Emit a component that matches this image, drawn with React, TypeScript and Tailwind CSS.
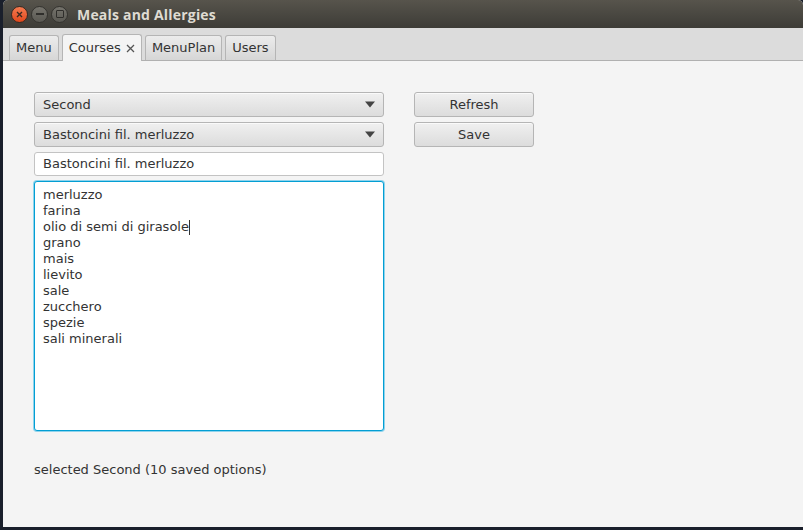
import React from 'react';

const ingredients = [
  'merluzzo',
  'farina',
  'olio di semi di girasole',
  'grano',
  'mais',
  'lievito',
  'sale',
  'zucchero',
  'spezie',
  'sali minerali',
];

const tabs = ['Menu', 'Courses', 'MenuPlan', 'Users'];

function Caret() {
  return (
    <svg width="12" height="7" viewBox="0 0 12 7" className="shrink-0">
      <path d="M1 0.5 L11 0.5 L6 6.5 Z" fill="#444" />
    </svg>
  );
}

function Combo({ value }: { value: string }) {
  return (
    <div className="h-[25px] flex items-center justify-between pl-[8px] pr-[7px] rounded-[3px] border border-[#b5b5b5] bg-gradient-to-b from-[#f0f0f0] to-[#dcdcdc] shadow-[inset_0_1px_0_#fafafa]">
      <span>{value}</span>
      <Caret />
    </div>
  );
}

function Btn({ label }: { label: string }) {
  return (
    <div className="h-[25px] w-[120px] flex items-center justify-center rounded-[3px] border border-[#b5b5b5] bg-gradient-to-b from-[#f0f0f0] to-[#dcdcdc] shadow-[inset_0_1px_0_#fafafa]">
      {label}
    </div>
  );
}

export default function App() {
  return (
    <div className="w-[803px] h-[530px] bg-[#1a1f2b] overflow-hidden" style={{ fontFamily: '"DejaVu Sans", sans-serif' }}>
      <div className="ml-[3px] w-[800px] h-[527px] flex flex-col bg-[#f4f4f4] rounded-t-[5px] overflow-hidden">
        {/* Title bar */}
        <div className="h-[28px] shrink-0 flex items-center bg-gradient-to-b from-[#57544c] to-[#3d3c37] pl-[8px]">
          <div className="flex gap-[3px]">
            <div className="w-[17px] h-[17px] rounded-full bg-gradient-to-b from-[#f47a4f] to-[#e0471a] flex items-center justify-center border border-[#3a2a22]">
              <svg width="7" height="7" viewBox="0 0 7 7">
                <path d="M1 1 L6 6 M6 1 L1 6" stroke="#3b2a20" strokeWidth="1.4" />
              </svg>
            </div>
            <div className="w-[17px] h-[17px] rounded-full bg-gradient-to-b from-[#75736c] to-[#5a5953] flex items-center justify-center border border-[#34332f]">
              <div className="w-[8px] h-[1.5px] bg-[#2f2e2b]" />
            </div>
            <div className="w-[17px] h-[17px] rounded-full bg-gradient-to-b from-[#75736c] to-[#5a5953] flex items-center justify-center border border-[#34332f]">
              <div className="w-[8px] h-[8px] border-[1.5px] border-[#2f2e2b] rounded-[1px]" />
            </div>
          </div>
          <span className="ml-[9px] text-[14px] font-bold text-[#dfdbd2] tracking-[0.2px]" style={{ fontFamily: '"Open Sans", sans-serif' }}>
            Meals and Allergies
          </span>
        </div>

        {/* Tab bar */}
        <div className="h-[33px] shrink-0 bg-[#dcdcdc] border-b border-[#b0b0b0] flex items-end pl-[6px] gap-[3px] text-[13px] text-[#333]">
          {tabs.map((t) =>
            t === 'Courses' ? (
              <div key={t} className="h-[27px] -mb-px px-[6px] flex items-center gap-[5px] bg-[#f4f4f4] border border-b-0 border-[#b5b5b5] rounded-t-[3px]">
                <span>{t}</span>
                <svg width="9" height="9" viewBox="0 0 9 9">
                  <path d="M1 1 L8 8 M8 1 L1 8" stroke="#555" strokeWidth="1.3" />
                </svg>
              </div>
            ) : (
              <div key={t} className="h-[25px] px-[6px] flex items-center bg-gradient-to-b from-[#ececec] to-[#d6d6d6] border border-b-0 border-[#b5b5b5] rounded-t-[3px]">
                {t}
              </div>
            )
          )}
        </div>

        {/* Content */}
        <div className="flex-1 pl-[31px] pt-[31px] text-[13px] text-[#333]">
          <div className="flex gap-[30px]">
            <div className="w-[350px] flex flex-col gap-[5px]">
              <Combo value="Second" />
              <Combo value="Bastoncini fil. merluzzo" />
              <div className="h-[24px] flex items-center px-[8px] bg-white border border-[#c3c3c3] rounded-[3px]">
                Bastoncini fil. merluzzo
              </div>
              <div className="h-[250px] bg-white border border-[#039ed3] rounded-[3px] shadow-[0_0_0_1px_#8fd3ec] px-[8px] pt-[5px] leading-[16px]">
                {ingredients.map((i) => (
                  <div key={i} className="flex items-center">
                    <span>{i}</span>
                    {i === 'olio di semi di girasole' && <span className="w-px h-[15px] bg-[#333]" />}
                  </div>
                ))}
              </div>
            </div>
            <div className="flex flex-col gap-[5px]">
              <Btn label="Refresh" />
              <Btn label="Save" />
            </div>
          </div>
          <div className="mt-[29px]">selected Second (10 saved options)</div>
        </div>
      </div>
    </div>
  );
}
